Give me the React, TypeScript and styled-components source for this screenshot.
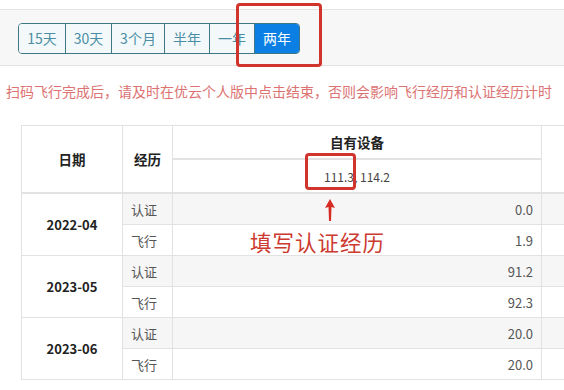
import React from "react";
import styled, { createGlobalStyle } from "styled-components";

const GlobalStyle = createGlobalStyle`
  body {
    margin: 0;
    background: #fff;
    font-family: "Noto Sans CJK SC", "Noto Sans", sans-serif;
    color: #333;
  }
`;

const ranges = ["15天", "30天", "3个月", "半年", "一年", "两年"];
const rangeWidths = [46, 46, 53, 45, 45, 45];

const rows = [
  { date: "2022-04", cert: "0.0", flight: "1.9" },
  { date: "2023-05", cert: "91.2", flight: "92.3" },
  { date: "2023-06", cert: "20.0", flight: "20.0" },
];

export default function App() {
  return (
    <Page>
      <GlobalStyle />
      <Toolbar>
        <ButtonGroup>
          {ranges.map((r, i) => (
            <RangeButton key={r} $active={i === ranges.length - 1} style={{ width: rangeWidths[i] }}>
              {r}
            </RangeButton>
          ))}
        </ButtonGroup>
      </Toolbar>
      <Notice>扫码飞行完成后，请及时在优云个人版中点击结束，否则会影响飞行经历和认证经历计时</Notice>
      <TableWrap>
        <Table>
          <colgroup>
            <col style={{ width: 101 }} />
            <col style={{ width: 50 }} />
            <col style={{ width: 369 }} />
            <col style={{ width: 60 }} />
          </colgroup>
          <thead>
            <tr>
              <HeadCell rowSpan={2}>日期</HeadCell>
              <HeadCell rowSpan={2}>经历</HeadCell>
              <HeadCell $h={32}>自有设备</HeadCell>
              <HeadCell rowSpan={2} />
            </tr>
            <tr>
              <SubHeadCell>111.3, 114.2</SubHeadCell>
            </tr>
          </thead>
          <tbody>
            {rows.map((r) => (
              <React.Fragment key={r.date}>
                <tr>
                  <DateCell rowSpan={2}>{r.date}</DateCell>
                  <KindCell $striped>认证</KindCell>
                  <ValueCell $striped>{r.cert}</ValueCell>
                  <ValueCell $striped />
                </tr>
                <tr>
                  <KindCell>飞行</KindCell>
                  <ValueCell>{r.flight}</ValueCell>
                  <ValueCell />
                </tr>
              </React.Fragment>
            ))}
          </tbody>
        </Table>
      </TableWrap>

      <MarkBox style={{ left: 236, top: 3, width: 80, height: 58 }} />
      <MarkBox style={{ left: 305, top: 153, width: 45, height: 31 }} />
      <Arrow width="12" height="22" viewBox="0 0 12 22">
        <path d="M6 0 L11 9 L7.5 8 L7 22 L5 22 L4.5 8 L1 9 Z" fill="#d62b23" />
      </Arrow>
      <MarkLabel>填写认证经历</MarkLabel>
    </Page>
  );
}

const Page = styled.div`
  position: relative;
  width: 564px;
  height: 390px;
  overflow: hidden;
`;

const Toolbar = styled.div`
  margin-top: 9px;
  height: 55px;
  display: flex;
  align-items: center;
  padding-left: 18px;
  background: #f7f7f7;
  border-top: 1px solid #e3e3e3;
  border-bottom: 1px solid #e3e3e3;
`;

const ButtonGroup = styled.div`
  display: flex;
  border: 1px solid #3f7686;
  border-radius: 4px;
  overflow: hidden;
  margin-top: 1px;
`;

const RangeButton = styled.div<{ $active?: boolean }>`
  height: 29px;
  display: flex;
  align-items: center;
  justify-content: center;
  font-size: 14px;
  box-sizing: border-box;
  color: ${(p) => (p.$active ? "#fff" : "#4b8ea3")};
  background: ${(p) => (p.$active ? "#0b7fe3" : "#f3f9fa")};
  border-left: 1px solid #3f7686;
  &:first-child {
    border-left: none;
  }
`;

const Notice = styled.div`
  margin: 15px 0 0 6px;
  line-height: 20px;
  font-size: 14px;
  color: #dc7272;
  white-space: nowrap;
`;

const TableWrap = styled.div`
  margin-top: 24px;
  padding-left: 21px;
`;

const Table = styled.table`
  border-collapse: collapse;
  table-layout: fixed;
  width: 580px;
  font-size: 13px;
  td, th {
    border: 1px solid #e2e2e2;
    padding: 0 8px;
  }
`;

const HeadCell = styled.th<{ $h?: number }>`
  font-weight: 700;
  font-size: 13.5px;
  color: #222;
  text-align: center;
  height: ${(p) => (p.$h ? `${p.$h}px` : "auto")};
  border-bottom: 2px solid #e2e2e2 !important;
`;

const SubHeadCell = styled.th`
  font-weight: 400;
  font-size: 12px;
  color: #444;
  text-align: center;
  height: 32px;
  border-bottom: 2px solid #e2e2e2 !important;
`;

const DateCell = styled.td`
  font-weight: 700;
  text-align: center;
  color: #222;
  background: #fff;
`;

const KindCell = styled.td<{ $striped?: boolean }>`
  height: 30px;
  color: #555;
  background: ${(p) => (p.$striped ? "#f6f6f6" : "#fff")};
`;

const ValueCell = styled.td<{ $striped?: boolean }>`
  text-align: right;
  color: #555;
  background: ${(p) => (p.$striped ? "#f6f6f6" : "#fff")};
`;

const MarkBox = styled.div`
  position: absolute;
  border: 3px solid #d0342c;
  border-radius: 4px;
`;

const Arrow = styled.svg`
  position: absolute;
  left: 324px;
  top: 199px;
`;

const MarkLabel = styled.div`
  position: absolute;
  left: 250px;
  top: 228px;
  font-size: 21.5px;
  letter-spacing: 1px;
  line-height: 28px;
  color: #cc3a30;
`;
